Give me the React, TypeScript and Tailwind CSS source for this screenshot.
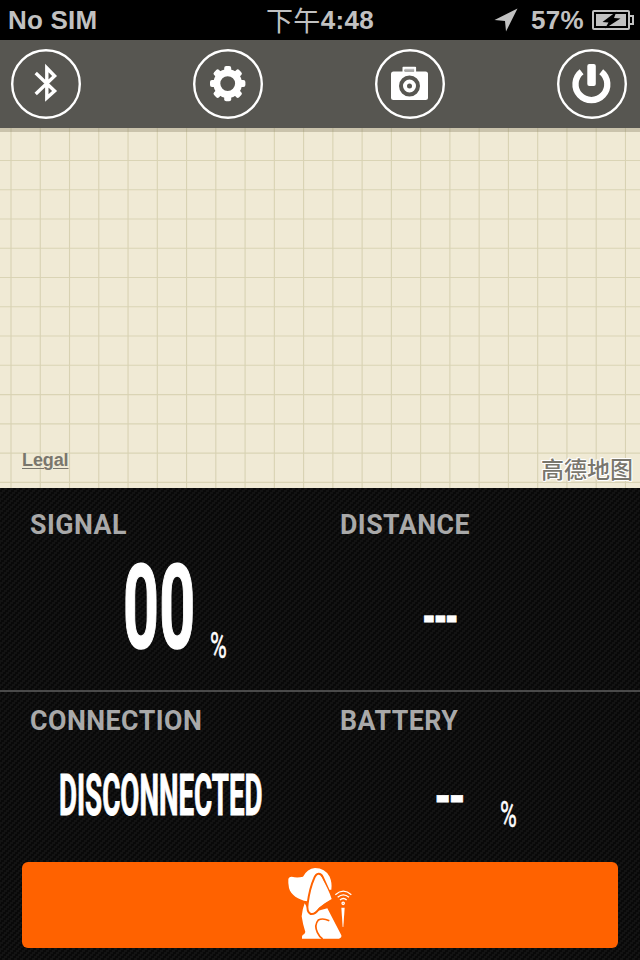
import type { ReactNode } from "react";

const STEP = 29.26;
const columns = Array.from({ length: 22 }, (_, i) => 11 + i * STEP);
const rows = Array.from({ length: 12 }, (_, i) => 32.5 + i * STEP);

function RoundButton({ label, children }: { label: string; children: ReactNode }) {
    return (
        <button aria-label={label} className="h-[70px] w-[70px]">
            <svg viewBox="0 0 70 70" className="block h-full w-full" fill="#fff">
                <circle cx="35" cy="35" r="33.8" fill="none" stroke="#fff" strokeWidth="2.4" />
                {children}
            </svg>
        </button>
    );
}

function StatusBar() {
    return (
        <header className="grid h-10 grid-cols-3 items-center bg-black text-[26px] leading-10 font-bold text-[#c1c1c1]">
            <span className="pl-2 tracking-[0.2px]">No SIM</span>
            <span className="flex items-center justify-center tracking-[0.3px] whitespace-nowrap">
                <span className="font-['Noto_Sans_CJK_SC',sans-serif] text-[27px] leading-10 font-normal">下午</span>
                4:48
            </span>
            <span className="flex items-center justify-end pr-1.5">
                <svg viewBox="0 0 24 24" className="mr-[13px] h-6 w-6" fill="#c1c1c1">
                    <path d="M23.5 0.5L12 23.5L11 13L0.5 12Z" />
                </svg>
                <span className="tracking-[0.3px]">57%</span>
                <svg viewBox="0 0 42 20" className="ml-2 h-5 w-[42px]">
                    <rect x="1" y="1" width="36" height="18" rx="1" fill="none" stroke="#c1c1c1" strokeWidth="2" />
                    <path d="M38 6h3v8h-3" fill="none" stroke="#c1c1c1" strokeWidth="2" />
                    <rect x="4" y="4" width="30" height="12" fill="#c1c1c1" />
                    <path d="M24.5 1.5L10.5 12L16.5 12.5L13 18.5L28.5 8.5L22 8Z" fill="#000" />
                </svg>
            </span>
        </header>
    );
}

function Toolbar() {
    return (
        <nav className="flex h-[88px] items-center justify-between bg-[#575651] pr-[13px] pl-[11px]">
            <RoundButton label="Bluetooth">
                <path
                    d="M24.7 24L43.6 42L35.8 49V19L43.6 27L24.7 45"
                    fill="none"
                    stroke="#fff"
                    strokeWidth="3.4"
                    strokeMiterlimit="6"
                />
            </RoundButton>
            <RoundButton label="Settings">
                <circle cx="34.7" cy="34.6" r="10.9" fill="none" stroke="#fff" strokeWidth="7" />
                {[0, 45, 90, 135, 180, 225, 270, 315].map((a) => (
                    <rect key={a} x="31.2" y="16.9" width="7" height="8" rx="2" transform={`rotate(${a} 34.7 34.6)`} />
                ))}
            </RoundButton>
            <RoundButton label="Camera">
                <path d="M27.5 23v-4.5q0-.8.8-.8h12q.8 0 .8.8v4.5h-2v-2.6h-9.6v2.6z" />
                <rect x="30" y="19.8" width="9" height="2" fill="#bbb" />
                <rect x="16" y="22.5" width="37" height="28.5" rx="2.5" />
                <circle cx="34.5" cy="37" r="8.5" fill="none" stroke="#575651" strokeWidth="4" />
                <circle cx="34.5" cy="37" r="2.5" fill="#575651" />
            </RoundButton>
            <RoundButton label="Power">
                <path d="M24.6 22.7A15.9 15.9 0 1 0 44.2 22.7" fill="none" stroke="#fff" strokeWidth="6.3" />
                <rect x="30.3" y="15" width="8.5" height="22" rx="2" />
            </RoundButton>
        </nav>
    );
}

function MapView() {
    return (
        <section className="relative h-[360px] overflow-hidden bg-[#f0ead5]">
            <svg viewBox="0 0 640 360" className="block h-[360px] w-[640px]">
                {rows.map((y) => (
                    <path key={y} d={`M0 ${y}H640`} stroke="#dad4b5" strokeWidth="1.1" />
                ))}
                {columns.map((x) => (
                    <path key={x} d={`M${x} 0V360`} stroke="#d8d2b3" strokeWidth="1.1" />
                ))}
                <rect width="640" height="4" fill="#8b846a" opacity="0.38" />
            </svg>
            <a className="absolute top-[321px] left-[22px] text-lg leading-[22px] font-bold tracking-[-0.1px] text-[#79766d] underline decoration-1 underline-offset-2">
                Legal
            </a>
            <span className="absolute top-[326px] right-[7px] font-['Noto_Sans_CJK_SC',sans-serif] text-[23px] leading-7 font-medium text-[#79766d] [text-shadow:1px_0_#fff,-1px_0_#fff,0_1px_#fff,0_-1px_#fff,1px_1px_#fff,-1px_-1px_#fff]">
                高德地图
            </span>
        </section>
    );
}

function Carbon() {
    return (
        <svg className="absolute inset-0 h-full w-full">
            <defs>
                <pattern id="carbon" width="6" height="6" patternUnits="userSpaceOnUse">
                    <rect width="6" height="6" fill="#090909" />
                    <rect y="4" width="3" height="2" fill="#131313" />
                    <rect x="2" y="2" width="3" height="2" fill="#131313" />
                    <rect x="4" width="2" height="2" fill="#131313" />
                    <rect width="1" height="2" fill="#131313" />
                </pattern>
            </defs>
            <rect width="100%" height="100%" fill="url(#carbon)" />
        </svg>
    );
}

function Label({ children }: { children: ReactNode }) {
    return (
        <h2 className="origin-left scale-x-[0.955] text-[28px] leading-7 font-bold tracking-[0.5px] text-[#a9a9a9]">
            {children}
        </h2>
    );
}

function Percent() {
    return (
        <span className="block w-[18px] origin-left scale-x-[0.62] text-[37px] leading-[38px] font-normal [-webkit-text-stroke:0.5px_#fff]">
            %
        </span>
    );
}

function Dog() {
    return (
        <svg viewBox="48 33 204 225" className="h-[75px] w-[68px]" fill="#fff">
            <path d="M55 73Q56 66 65 65.5Q83 69 99 65Q112 41 135 39Q165 39 179 65Q187 84 184 104L165 105L112 139C85 135 62 119 57 99Q54 83 55 73Z" />
            <path d="M104 145Q97 162 95 184Q98 206 106 231Q104 238 98 240Q95 244 96 251H207Q216 248 214 241L172 160L120 174Z" />
            <path
                d="M132 71C139 52 152 53 158 66C168 87 178 110 186 133Q165 145 148 160Q135 179 122 177Q109 170 113 145Q119 100 132 71Z"
                stroke="#ff6200"
                strokeWidth="6"
            />
            <path d="M137 72C143 59 151 59 156 70Q177 106 185 132Q163 144 146 158Q134 173 124 173Q115 165 118 144Q125 99 137 72Z" />
            <path d="M178 197Q158 188 145 195Q132 210 142 232Q148 245 158 252" fill="none" stroke="#ff6200" strokeWidth="5" />
            <g fill="none" stroke="#fff" strokeWidth="4">
                <path d="M196 119Q220 98 244 119" />
                <path d="M203 127Q220 112 237 127" />
                <path d="M210 135Q220 126 230 135" />
                <circle cx="219.5" cy="145" r="3.5" />
            </g>
            <path d="M214 158h10L220 216h-2z" />
        </svg>
    );
}

export default function App() {
    return (
        <div className="flex h-[960px] w-[640px] flex-col overflow-hidden bg-black font-['Liberation_Sans',Arial,sans-serif]">
            <StatusBar />
            <Toolbar />
            <MapView />

            <main className="relative h-[472px] font-[Roboto,sans-serif] text-white">
                <Carbon />
                <div className="relative flex h-full flex-col">
                    <section className="grid h-[202px] grid-cols-[310px_330px] pt-[23px] pl-[30px]">
                        <div>
                            <Label>SIGNAL</Label>
                            <div className="flex pt-[11px] pl-[93px]">
                                <span className="block w-[87px] origin-left scale-x-[0.54] text-[116px] leading-[117px] font-bold tracking-[0.6px] [-webkit-text-stroke:1.5px_#fff]">
                                    00
                                </span>
                                <div className="pt-[77px]">
                                    <Percent />
                                </div>
                            </div>
                        </div>
                        <div>
                            <Label>DISTANCE</Label>
                            <div className="pt-[55px] pl-[82px]">
                                <span className="block w-10 origin-left scale-x-[0.65] text-[48px] leading-[48px] font-black tracking-[-4px] whitespace-nowrap [-webkit-text-stroke:0.8px_#fff]">
                                    ---
                                </span>
                            </div>
                        </div>
                    </section>

                    <div className="h-0.5 bg-[#4a4a4a]" />

                    <section className="grid h-[170px] grid-cols-[310px_330px] pt-[15px] pl-[30px]">
                        <div>
                            <Label>CONNECTION</Label>
                            <div className="pt-8 pl-[29px]">
                                <span className="block w-[204px] origin-left scale-x-[0.486] text-[57px] leading-[57px] font-bold [-webkit-text-stroke:1px_#fff]">
                                    DISCONNECTED
                                </span>
                            </div>
                        </div>
                        <div>
                            <Label>BATTERY</Label>
                            <div className="flex pt-9 pl-[94px]">
                                <span className="block w-[66px] origin-left scale-x-[0.755] text-[52px] leading-[54px] font-black tracking-[-4.5px] whitespace-nowrap [-webkit-text-stroke:0.8px_#fff]">
                                    --
                                </span>
                                <div className="pt-[25px]">
                                    <Percent />
                                </div>
                            </div>
                        </div>
                    </section>

                    <button
                        aria-label="Find"
                        className="mr-[22px] ml-[22px] flex h-[86px] w-[596px] items-start justify-center rounded-md bg-[#ff6200] pt-1"
                    >
                        <Dog />
                    </button>
                </div>
            </main>
        </div>
    );
}
